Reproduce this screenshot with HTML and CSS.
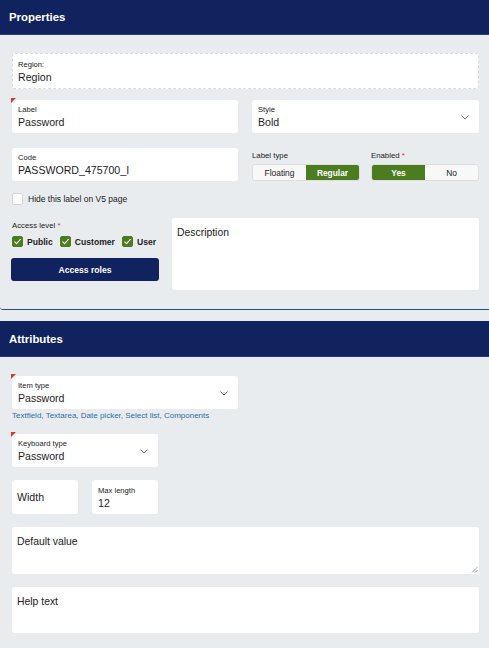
FILE: index.html
```html
<!DOCTYPE html>
<html>
<head>
<meta charset="utf-8">
<link rel="stylesheet" href="styles.css">
</head>
<body>
<section class="panel panel-props">
  <header class="panel-head">Properties</header>
  <div class="panel-body">
    <div class="field field-dashed">
      <div class="f-label">Region:</div>
      <div class="f-value">Region</div>
    </div>

    <div class="row row-1">
      <div class="field req">
        <div class="f-label">Label</div>
        <div class="f-value">Password</div>
      </div>
      <div class="field select">
        <div class="f-label">Style</div>
        <div class="f-value">Bold</div>
        <svg class="chev" width="8" height="5" viewBox="0 0 8 5"><path d="M0.5 0.5 L4 4 L7.5 0.5" fill="none" stroke="#777" stroke-width="1"/></svg>
      </div>
    </div>

    <div class="row row-2">
      <div class="field">
        <div class="f-label">Code</div>
        <div class="f-value">PASSWORD_475700_I</div>
      </div>
      <div class="toggles">
        <div class="tgroup">
          <div class="t-label">Label type</div>
          <div class="toggle">
            <span class="opt">Floating</span>
            <span class="opt on">Regular</span>
          </div>
        </div>
        <div class="tgroup">
          <div class="t-label">Enabled <span class="star">*</span></div>
          <div class="toggle">
            <span class="opt on">Yes</span>
            <span class="opt">No</span>
          </div>
        </div>
      </div>
    </div>

    <div class="hide-row">
      <span class="cb"></span>
      <span>Hide this label on V5 page</span>
    </div>

    <div class="lower">
      <div class="access">
        <div class="t-label">Access level <span class="star">*</span></div>
        <div class="checks">
          <span class="chk"><span class="cb on"><svg width="9" height="9" viewBox="0 0 9 9"><path d="M1.5 4.6 L3.6 6.6 L7.6 2.2" fill="none" stroke="#fff" stroke-width="1.1"/></svg></span>Public</span>
          <span class="chk"><span class="cb on"><svg width="9" height="9" viewBox="0 0 9 9"><path d="M1.5 4.6 L3.6 6.6 L7.6 2.2" fill="none" stroke="#fff" stroke-width="1.1"/></svg></span>Customer</span>
          <span class="chk"><span class="cb on"><svg width="9" height="9" viewBox="0 0 9 9"><path d="M1.5 4.6 L3.6 6.6 L7.6 2.2" fill="none" stroke="#fff" stroke-width="1.1"/></svg></span>User</span>
        </div>
        <div class="btn">Access roles</div>
      </div>
      <div class="area desc">Description</div>
    </div>
  </div>
</section>

<section class="panel panel-attr">
  <header class="panel-head">Attributes</header>
  <div class="panel-body attr-body">
    <div class="field select req w-item">
      <div class="f-label">Item type</div>
      <div class="f-value">Password</div>
      <svg class="chev" width="8" height="5" viewBox="0 0 8 5"><path d="M0.5 0.5 L4 4 L7.5 0.5" fill="none" stroke="#777" stroke-width="1"/></svg>
    </div>
    <div class="hint">Textfield, Textarea, Date picker, Select list, Components</div>

    <div class="field select req w-kb">
      <div class="f-label">Keyboard type</div>
      <div class="f-value">Password</div>
      <svg class="chev" width="8" height="5" viewBox="0 0 8 5"><path d="M0.5 0.5 L4 4 L7.5 0.5" fill="none" stroke="#777" stroke-width="1"/></svg>
    </div>

    <div class="row-small">
      <div class="field small placeholder">
        <div class="f-value">Width</div>
      </div>
      <div class="field small">
        <div class="f-label">Max length</div>
        <div class="f-value">12</div>
      </div>
    </div>

    <div class="area dv">Default value
      <svg class="grip" width="8" height="8" viewBox="0 0 8 8"><path d="M7.5 2 L2 7.5 M7.5 5 L5 7.5" stroke="#999" stroke-width="0.8"/></svg>
    </div>
    <div class="area ht">Help text</div>
  </div>
</section>
</body>
</html>
```
FILE: styles.css
```css
* { box-sizing: border-box; }
html, body { margin: 0; padding: 0; }
body {
  background: #e9ecef;
  font-family: "Liberation Sans", Arial, sans-serif;
  color: #222;
  width: 489px;
  overflow: hidden;
}
.panel-props {
  border-bottom: 1px solid #34478a;
  border-bottom-left-radius: 3px;
}
.panel-head {
  background: #10235e;
  color: #fff;
  font-weight: bold;
  font-size: 11.4px;
  height: 35px;
  display: flex;
  align-items: center;
  padding-left: 9px;
  border-bottom: 1px solid #2a3d78;
}
.panel-attr .panel-head {
  height: 36px;
  padding-top: 1px;
}
.panel-body {
  padding: 18px 10px 19px 12px;
}
.field {
  position: relative;
  background: #fff;
  border-radius: 3px;
  height: 33px;
  padding: 5px 6px 0 6px;
}
.field-dashed {
  height: 36px;
  border: 1px dashed #dcdcdc;
  padding: 6px 5px 0 5px;
}
.f-label {
  font-size: 7.6px;
  line-height: 10px;
  color: #222;
}
.f-value {
  font-size: 10.6px;
  line-height: 14px;
  color: #1e1e1e;
}
.req::before {
  content: "";
  position: absolute;
  top: -2px;
  left: -1px;
  width: 5px;
  height: 5px;
  background: #e0362a;
  clip-path: polygon(0 0, 100% 0, 0 100%);
}
.chev {
  position: absolute;
  right: 10px;
  top: 15px;
}
.row {
  display: grid;
  grid-template-columns: 226px 227px;
  column-gap: 14px;
}
.row-1 { margin-top: 11px; }
.row-2 { margin-top: 15px; align-items: end; }
.toggles {
  display: flex;
  gap: 11px;
}
.tgroup { width: 108px; }
.t-label {
  font-size: 7.8px;
  line-height: 10px;
  color: #222;
  margin-bottom: 3px;
}
.star { color: #e0362a; }
.toggle {
  display: flex;
  height: 17px;
  border: 1px solid #dedede;
  border-radius: 3px;
  background: #f8f8f8;
  overflow: hidden;
}
.opt {
  flex: 1;
  display: flex;
  align-items: center;
  justify-content: center;
  font-size: 8.4px;
  color: #222;
}
.opt.on {
  background: #4c7c20;
  color: #fff;
  font-weight: bold;
}
.hide-row {
  margin-top: 12px;
  display: flex;
  align-items: center;
  gap: 5px;
  font-size: 8.5px;
  color: #222;
  height: 12px;
}
.cb {
  width: 11px;
  height: 12px;
  border: 1px solid #d6d6d6;
  border-radius: 2px;
  background: #fff;
  display: inline-flex;
  align-items: center;
  justify-content: center;
  flex: none;
}
.cb.on {
  width: 11px;
  height: 11px;
  background: #4c7c20;
  border-color: #4c7c20;
}
.lower {
  margin-top: 13px;
  display: grid;
  grid-template-columns: 147px 307px;
  column-gap: 13px;
}
.access { padding-top: 3px; }
.access .t-label { margin-bottom: 5px; }
.checks {
  display: flex;
  gap: 7px;
  height: 11px;
  align-items: center;
}
.chk {
  display: flex;
  align-items: center;
  gap: 4px;
  font-size: 8.6px;
  font-weight: bold;
  color: #222;
}
.btn {
  margin-top: 11px;
  margin-left: -1px;
  height: 23px;
  background: #10235e;
  color: #fff;
  font-weight: bold;
  font-size: 8.6px;
  border-radius: 3px;
  display: flex;
  align-items: center;
  justify-content: center;
}
.area {
  position: relative;
  background: #fff;
  border-radius: 3px;
  font-size: 10.4px;
  line-height: 14px;
  color: #222;
  padding: 8px 5px;
}
.desc { height: 72px; }
.panel-attr { margin-top: 11px; }
.attr-body { padding-top: 19px; }
.w-item { width: 226px; }
.hint {
  margin-top: 2px;
  font-size: 8px;
  line-height: 10px;
  color: #2a6ea4;
}
.w-kb { width: 146px; margin-top: 13px; }
.row-small {
  margin-top: 13px;
  display: flex;
  gap: 14px;
}
.small { width: 66px; height: 34px; padding-top: 6px; }
.placeholder {
  display: flex;
  align-items: center;
  padding: 0 5px;
}
.placeholder .f-value { font-size: 10.6px; }
.dv { margin-top: 13px; height: 47px; }
.ht { margin-top: 13px; height: 46px; }
.grip {
  position: absolute;
  right: 1px;
  bottom: 1px;
}
```
